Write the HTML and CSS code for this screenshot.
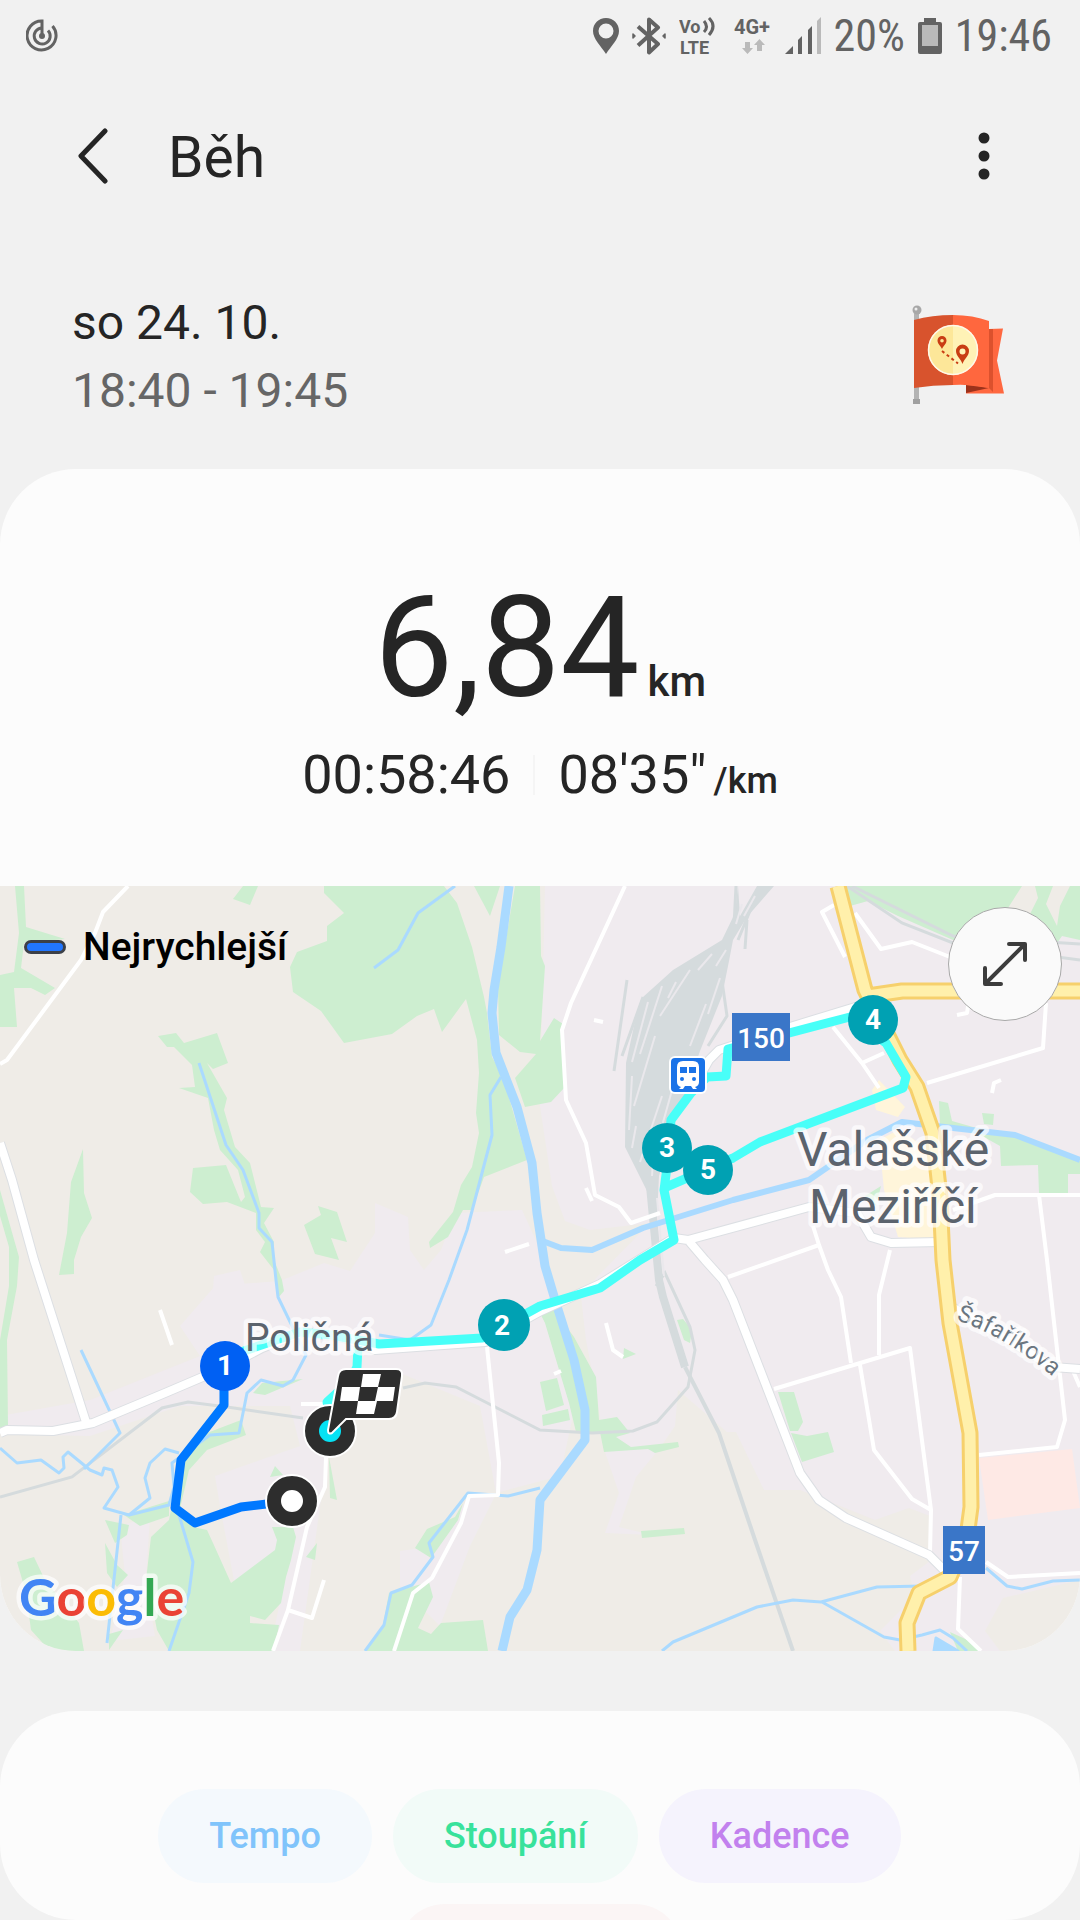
FILE: index.html
```html
<!DOCTYPE html>
<html lang="cs">
<head>
    <meta charset="UTF-8">
    <meta name="viewport" content="width=device-width, initial-scale=1.0">
    <title>Běh</title>
    <link rel="stylesheet" href="styles.css">
</head>
<body>

<div class="status-bar">
    <svg class="status-app" width="32" height="34" viewBox="0 0 32 34" fill="none" stroke="#636363" stroke-width="3">
        <path d="M16 17V2A14.500 14.500 0 1 0 26.500 7"/>
        <path d="M16 9A8 8 0 1 0 22 11.500"/>
        <circle cx="16" cy="17" r="3" fill="#636363" stroke="none"/>
    </svg>
    <svg width="26" height="36" viewBox="0 0 26 36" fill="#636363">
        <path fill-rule="evenodd" d="M13 0C5.500 0 0 5.600 0 13c0 8 8 15 13 23 5-8 13-15 13-23C26 5.600 20.500 0 13 0zm0 5.500a7.500 7.500 0 1 1 0 15 7.500 7.500 0 0 1 0-15z"/>
    </svg>
    <svg width="34" height="38" viewBox="0 0 34 38" fill="none" stroke="#636363" stroke-width="4" stroke-linejoin="round">
        <path d="M6 9.500L26 27 17 35.500V2.500L26 10.500 6 28.500"/>
        <path d="M1 17v4l2-2zM33 17v4l-2-2z" stroke-width="1.500" fill="#636363"/>
    </svg>
    <svg class="status-volte" width="38" height="46" viewBox="0 -4 38 46">
        <text x="0" y="16">Vo</text>
        <text x="1" y="37">LTE</text>
        <path d="M25 4q5 6 0 11M30 1q8 8 0 17" fill="none" stroke="#636363" stroke-width="3"/>
    </svg>
    <svg class="status-network" width="42" height="38" viewBox="0 0 42 38">
        <text x="4" y="17">4G+</text>
        <path d="M15 25h5v6h3l-5.500 6-5.500-6h3zM27 34v-6h-3l5.500-6 5.500 6h-3v6z" fill="#bababa"/>
    </svg>
    <svg width="36" height="38" viewBox="0 0 36 38" fill="#636363">
        <path d="M0 37l8-8v8zM13 37V23l4-4v18zM23 37V13l4-4v28z"/>
        <path d="M32 37V4l4-4v37z" fill="#bababa"/>
    </svg>
    <span>20%</span>
    <svg width="24" height="36" viewBox="0 0 24 36">
        <path d="M6 0h12v4h4q2 0 2 2v28q0 2-2 2H2q-2 0-2-2V6q0-2 2-2h4z" fill="#636363"/>
        <path d="M4 7h16v21H4z" fill="#bababa"/>
    </svg>
    <span>19:46</span>
</div>

<header class="app-bar">
    <button class="icon-button" aria-label="Zpět">
        <svg width="30" height="56" viewBox="0 0 30 56" fill="none" stroke="#252525" stroke-width="5" stroke-linecap="round" stroke-linejoin="round">
            <path d="M27 3L3 28l24 25"/>
        </svg>
    </button>
    <h1>Běh</h1>
    <button class="icon-button menu-button" aria-label="Další možnosti">
        <svg width="12" height="50" viewBox="0 0 12 50" fill="#252525">
            <circle cx="6" cy="7" r="5.500"/><circle cx="6" cy="25" r="5.500"/><circle cx="6" cy="43" r="5.500"/>
        </svg>
    </button>
</header>

<section class="summary">
    <div>
        <p class="date">so 24. 10.</p>
        <p class="time">18:40 - 19:45</p>
    </div>
    <svg width="96" height="106" viewBox="0 0 96 106">
        <path d="M2 10h5v88H2z" fill="#b3b3b3"/>
        <path d="M1 95h7v5H1z" fill="#a0a0a0"/>
        <circle cx="5" cy="6" r="4.500" fill="#a8a8a8"/>
        <circle cx="4" cy="5" r="1.500" fill="#eee"/>
        <path d="M77 25l14-.500-6 32 7 33H54v-9z" fill="#ff6840"/>
        <path d="M77 25h4v63l-4-4z" fill="#dc512d"/>
        <path d="M54 81l23 3-23 5z" fill="#9c321b"/>
        <path d="M2 16Q20 11 41 11v70q-20 0-39 3z" fill="#d8532d"/>
        <path d="M41 11q20 0 36 6v67q-18-4-36-3z" fill="#ff673e"/>
        <circle cx="41" cy="46" r="25" fill="#fff2b6"/>
        <path d="M41 22a24 24 0 0 0 0 48z" fill="#fde799"/>
        <circle cx="41" cy="46" r="24.500" fill="none" stroke="#fff8e8" stroke-width="1.500"/>
        <path fill-rule="evenodd" d="M30 32a4.500 4.500 0 0 0-4.500 4.500C25.500 40 29 42 30 45c1-3 4.500-5 4.500-8.500A4.500 4.500 0 0 0 30 32zm0 3a1.800 1.800 0 1 1 0 3.600 1.800 1.800 0 0 1 0-3.600zM50.500 40.500A6.500 6.500 0 0 0 44 47c0 5 5 8 6.500 13 1.500-5 6.500-8 6.500-13a6.500 6.500 0 0 0-6.500-6.500zm0 4a3 3 0 1 1 0 6 3 3 0 0 1 0-6z" fill="#c93d13"/>
        <path d="M30 47l16 12.500" stroke="#c93d13" stroke-width="2" stroke-dasharray="3 3"/>
    </svg>
</section>

<main class="workout">
    <div class="stats">
        <p class="distance">6,84 <span class="unit">km</span></p>
        <div class="details">
            <span>00:58:46</span>
            <span class="divider"></span>
            <span class="pace">08'35" <span class="unit">/km</span></span>
        </div>
    </div>

    <div class="map">
        <svg class="map-canvas" viewBox="0 0 1080 765" role="img" aria-label="Mapa trasy">
            <rect width="1080" height="765" fill="#efece7"/>

            <!-- built-up areas -->
            <g fill="#f0ebef">
                <path d="M545 0H1080V694L1003 712 985 745 1000 765H895L880 745 915 710 910 690 930 675V630L909 622 875 634 800 604H764L736 546H727L678 504 675 540 660 562 636 591 619 641 652 649 605 647 619 607 605 566 598 517 586 454 581 411 597 391 650 337 590 344 565 335 552 300 540 220z"/>
                <path d="M0 530L90 514 200 470 180 440 215 400 280 395 324 377 350 385 375 347V317L408 331 410 364 424 384 441 364 455 327 522 324 545 374 575 520 560 590 496 607 480 520 400 487 345 510 330 560 320 620 300 765H270L295 640 293 700 235 700 220 620 215 590 300 560 290 520H180L90 550 0 548z"/>
                <path d="M120 640L150 630 146 694 155 750 110 755 125 690zM400 665L435 660 470 610 495 610 470 660 440 740 400 700z"/>
                <path d="M214 390l26-6 10 30-20 16-18-14z"/>
            </g>

            <!-- woods and parks -->
            <g fill="#cdeed0">
                <path d="M15 0H24L26 41 65 53 24 57 21 82 55 102 45 109 31 102H14L17 141H0V89L14 86 19 47z"/>
                <path d="M243 0H258L250 19 233 13z"/>
                <path d="M324 0H444L457 17 472 61 484 111 487 127 492 171 503 191 527 274 484 291 472 324H463L448 351 430 362 429 356 453 326 461 299 472 281 479 247 476 227 479 187 477 154 466 113 442 146 434 123 417 130 392 148 344 157 321 125 293 106 290 81 297 66 327 55V40L344 27 324 7z"/>
                <path d="M474 0H500L490 30z"/>
                <path d="M515 0H540L541 70 545 80 540 155 554 132 563 138 566 200 551 216 525 221 515 192 536 168 520 166 499 149 498 100z"/>
                <path d="M158 150L176 147 184 157 217 147 228 177 213 183 207 177 227 212 224 224 235 261 250 277 261 321 274 322 264 337 274 356V374L282 394 284 405 278 412 274 384 260 366 265 356 256 344V327L227 316 203 318 190 306 193 282 226 279 241 316 245 311 238 284 220 264 214 244 208 212 179 202 195 201 192 179 174 161H167z"/>
                <path d="M83 263L84 307 92 332 81 351 74 374V388L59 389 67 347 71 296z"/>
                <path d="M0 304L19 371 17 400 7 454 8 540 0 542V454L9 400V361L0 330z"/>
                <path d="M318 320L337 326 347 356 331 352 339 374 315 368 304 339 321 329z"/>
                <path d="M181 574L207 547 241 534 246 549 207 564 189 584 179 627 193 641 207 644 213 657 231 697 275 664 277 654 272 641H293L296 651 291 674 286 691 281 717 265 734 250 730V737L279 739 274 765H169L157 744 151 714 146 694 151 651 169 634z"/>
                <path d="M17 676L34 671 45 694 79 737 84 765H50L31 744 26 707z"/>
                <path d="M105 634L129 639 127 649 115 657zM105 657L117 679 128 689 117 701 107 687zM124 629L169 615V630L140 640zM109 748l14-4-14 20z"/>
                <path d="M427 643L455 631 463 617 458 634 431 672 415 662z"/>
                <path d="M389 707L429 696 433 711 418 742 431 748 441 737 483 734 488 765H365L382 744z"/>
                <path d="M253 507L262 497 303 493 265 509zM329 571L337 614 330 612zM317 657L315 674 306 671zM275 580L283 589 270 591z"/>
                <path d="M540 427L554 424 574 451 596 491 599 534 617 531 630 547 616 551 631 561 678 556 679 561 655 567 648 563 604 566 600 546H576L569 517 545 437z"/>
                <path d="M540 496L557 492 564 519 546 525zM542 529L568 523 570 534 543 540zM677 434L683 433 692 444 690 457 684 454zM624 462L636 468 623 473z"/>
                <path d="M778 506H794L803 536 798 545H790zM791 547L807 550 828 546 834 566 802 576zM641 645L684 642 685 648 642 652z"/>
                <path d="M950 746L974 757 979 765H958z"/>
                <path d="M845 0H1080V54L1062 50 1055 60 953 54 898 30 868 15 850 20z"/>
                <path d="M939 215L948 217 952 235 980 243 940 240zM982 227L994 228 993 239 984 238z"/>
                <path d="M975 246L1022 249 1080 275V288H1068V307H1039L1038 279 1001 280 1000 260zM881 300L876 320 865 310z"/>
            </g>
            <path d="M1008 22L1022 0H1035L1038 12 1028 32zM1046 18L1053 0H1070L1060 20 1057 40z" fill="#efece7"/>
            <path d="M979 572L1072 563 1080 622 988 634z" fill="#fee9e5"/>
            <path d="M879 194L905 221 898 231 876 224 872 204zM879 254L898 244 926 261 946 294 933 354 898 351 884 304z" fill="#fff5da"/>

            <!-- railway -->
            <g fill="none" stroke="#d5dbdd" stroke-width="4">
                <path d="M738 0L735 27 722 54 673 84 643 111 634 140 626 177 625 261 650 311 657 330 659 290 672 245 700 165 722 110 729 75 733 54 747 31 774 0 757 0 740 30z" fill="#d5dbdd" stroke="none"/>
                <path d="M627 94L614 185M643 111L622 170M738 54L752 20M745 63L747 34M722 95L727 130 708 160M736 0L734 40" stroke-width="3"/>
                <path d="M650 300L659 394 663 411 685 481" stroke-width="8"/>
                <path d="M656 400L665 387 690 441 695 464 688 501 657 536 633 545 592 547 540 544 456 501 425 497 403 502M0 611L72 591 162 522 188 516 227 521 303 532" stroke-width="3"/>
                <path d="M685 481L719 547 754 651 793 765"/>
                <path d="M847 0L902 37 953 57 1080 74M852 0L953 50 1080 58" stroke-width="3"/>
            </g>
            <!-- gaps between the station tracks -->
            <path d="M648 116L632 176M662 100L640 168M690 84L660 130M676 96L668 112M712 68L698 84M726 64L716 80M655 150L634 220M632 190L629 244M706 118L690 160M720 92L708 128M662 210L640 276M676 190L662 240M636 240L632 262M742 18L736 38M755 10L744 30M655 240L652 290M657 312L664 390" fill="none" stroke="#eae8ec" stroke-width="2"/>

            <!-- rivers and streams -->
            <g fill="none" stroke="#aadaff" stroke-width="3" stroke-linejoin="round">
                <path d="M509 0L501 61 494 104 492 127 496 167 517 221 532 277 537 327 545 380 556 417 574 474 585 524V554L540 614 537 664 527 704 510 731 502 765" stroke-width="9"/>
                <path d="M540 354L561 362 592 364 643 342 733 314 809 294 867 254 902 236 953 242 1015 249 1080 274" stroke-width="6"/>
                <path d="M455 0L418 27 398 64 374 82"/>
                <path d="M199 177L226 259 243 284 259 327V342L272 356 276 394 278 411 294 444 306 469 293 494 283 500 261 494 247 507 239 547 210 549 172 577 174 601 169 619 129 629"/>
                <path d="M501 191L490 209 492 249 467 344 449 394 431 439 410 454 379 449"/>
                <path d="M81 464L120 547 84 583M0 562L17 577 41 574 59 587 64 582 63 571 68 566 90 584 102 589 104 582 112 584 118 601 104 622 129 629 150 612 145 592 150 577 165 563 179 567"/>
                <path d="M121 629L107 757M176 619L193 676 189 707 169 765"/>
                <path d="M540 602L508 610 468 607 429 657 433 671 412 699 391 707 384 739 365 765"/>
                <path d="M662 765L673 756 757 721 793 714 821 716 877 701 922 700M822 716L884 751 900 754 922 749 940 744 953 752 967 765M986 682L1007 700 1022 703 1053 695 1080 694"/>
                <path d="M936 752L958 765H934z" fill="#aadaff"/>
            </g>

            <!-- side streets -->
            <g fill="none" stroke="#fff" stroke-width="4" stroke-linejoin="round">
                <path d="M128 0L103 26 95 47 81 74 7 174 0 178M160 424L172 459M301 518H327"/>
                <path d="M487 461L499 577 498 609 469 610 461 637 432 692 413 707 394 765"/>
                <path d="M326 571L325 601 307 641 288 724 273 765M288 724L312 732 324 694"/>
                <path d="M625 0L571 117 562 144 566 214 586 257 595 309 619 321 631 337 660 327M586 302L592 315M594 134L603 136M505 366L529 358"/>
                <path d="M834 19L822 26 845 71M855 27L881 63 912 56 950 71M833 141L862 177 879 202M862 177L884 167M927 197L1043 162 1046 117M1001 194L994 197 992 207M969 114L967 127 957 129"/>
                <path d="M728 391L819 359 813 340M819 359L828 384 841 411 851 477M890 364L879 409V469M774 503L910 462 931 624 930 667M860 479L874 564 912 613 931 624"/>
                <path d="M953 324L995 309H1080M1039 309L1047 374 1065 534 1057 561 979 569M1073 485L1080 501M960 691L958 743 981 765M986 676L1008 691 1080 687M606 437L613 464 623 471M554 488L561 485"/>
            </g>

            <!-- main streets, grey casing first -->
            <g fill="none" stroke-linejoin="round">
                <g stroke="#dcdfe3" stroke-width="10">
                    <path d="M0 257L12 294 34 374 86 536M0 547L7 544 53 545 93 537 165 507 226 481 262 462 303 446 344 452 375 464 485 456 541 425 600 398 674 352"/>
                    <path d="M674 352L688 354 809 321 857 327 871 351 891 357 940 356M688 354L705 374 723 394 733 414 800 587 819 614 846 632 929 669 948 688M952 421L1053 481 1080 483M862 119L790 141 719 164 709 174 700 190"/>
                </g>
                <g stroke="#fff" stroke-width="8">
                    <path d="M0 257L12 294 34 374 86 536M0 547L7 544 53 545 93 537 165 507 226 481 262 462 303 446 344 452 375 464 485 456 541 425 600 398 674 352"/>
                    <path d="M674 352L688 354 809 321 857 327 871 351 891 357 940 356M688 354L705 374 723 394 733 414 800 587 819 614 846 632 929 669 948 688M952 421L1053 481 1080 483M862 119L790 141 719 164 709 174 700 190"/>
                </g>
                <path d="M838 0L865 104 900 174 917 201 933 247 940 311 943 374 950 437 970 547 971 621 967 651 950 691 919 707 907 737 908 765M868 110L902 105H1080" stroke="#f6d06c" stroke-width="17"/>
                <path d="M838 0L865 104 900 174 917 201 933 247 940 311 943 374 950 437 970 547 971 621 967 651 950 691 919 707 907 737 908 765M868 110L902 105H1080" stroke="#fff0ab" stroke-width="11"/>
            </g>

            <!-- track -->
            <g fill="none" stroke="#48fff8" stroke-width="9" stroke-linejoin="round">
                <path d="M226 481L241 466 300 446 331 449 379 458 482 452 540 420 600 402 640 374 674 354 664 304 667 281 671 234 691 207 707 191 726 190 728 163 850 131 886 157 906 191 903 202 760 256 733 272 664 302"/>
                <path d="M330 530L327 516 350 495 357 481 358 460"/>
                <path d="M224 500V519L181 574 175 622 195 637 241 621 292 615" stroke="#0078ff"/>
            </g>

            <!-- place names -->
            <g class="place">
                <text x="245" y="465" class="village">Poličná</text>
                <text x="893" y="280" class="town">Valašské</text>
                <text x="893" y="337" class="town">Meziříčí</text>
                <path id="street" d="M956 434Q1005 450 1052 490" fill="none" stroke="none"/>
                <text class="street"><textPath href="#street">Šafaříkova</textPath></text>
            </g>

            <g class="shield">
                <rect x="732" y="127" width="58" height="48"/>
                <text x="761" y="162">150</text>
                <rect x="943" y="640" width="42" height="48"/>
                <text x="964" y="675">57</text>
            </g>

            <!-- train station -->
            <g>
                <rect x="669" y="170" width="38" height="38" rx="6" fill="#fff"/>
                <rect x="671" y="172" width="34" height="34" rx="4" fill="#1a73e8"/>
                <path d="M683 175h10q6 0 6 6v15q0 4-4 5l2 2h-4l-2-3h-6l-2 3h-4l2-2q-4-1-4-5v-15q0-6 6-6z" fill="#fff"/>
                <path d="M680 181h7v6h-7zM689 181h7v6h-7z" fill="#1a73e8"/>
                <circle cx="682" cy="193" r="2" fill="#1a73e8"/><circle cx="694" cy="193" r="2" fill="#1a73e8"/>
            </g>

            <!-- kilometre marks -->
            <g class="mark">
                <circle cx="225" cy="480" r="25" fill="#0060f3"/><text x="225" y="489">1</text>
                <circle cx="504" cy="439" r="26" fill="#00a1b3"/><text x="502" y="449">2</text>
                <circle cx="667" cy="262" r="25" fill="#00a1b3"/><text x="667" y="271">3</text>
                <circle cx="708" cy="284" r="25" fill="#00a1b3"/><text x="708" y="293">5</text>
                <circle cx="873" cy="134" r="25" fill="#00a1b3"/><text x="873" y="143">4</text>
            </g>

            <!-- start and finish -->
            <g stroke="#fff" stroke-width="2">
                <circle cx="292" cy="615" r="26" fill="#2d2d2d"/>
                <circle cx="292" cy="615" r="10" fill="#fff"/>
                <circle cx="330" cy="545" r="26" fill="#2d2d2d"/>
                <circle cx="330" cy="545" r="11" fill="#05e2f4" stroke="none"/>
                <path d="M346 483h50q7 0 6 7l-5 36q-1 7-8 7h-43l-14 14q-4 2-4-3l10-54q1-7 8-7z" fill="#2d2d2d"/>
                <path d="M363 488h18l-3 13h17l-2 14h-16l-3 13h-18l2-13h-18l2-14h19zM360 501l-2 14h17l3-14z" fill="#fff" fill-rule="evenodd" stroke="none"/>
            </g>

            <text class="google" x="19" y="730"><tspan fill="#4285f4">G</tspan><tspan fill="#ea4335">o</tspan><tspan fill="#fbbc05">o</tspan><tspan fill="#4285f4">g</tspan><tspan fill="#34a853">l</tspan><tspan fill="#ea4335">e</tspan></text>
        </svg>

        <div class="legend">
            <span class="legend-line"></span>
            <span>Nejrychlejší</span>
        </div>
        <button class="expand-button" aria-label="Zvětšit mapu">
            <svg width="46" height="46" viewBox="0 0 46 46" fill="none" stroke="#3c3c3c" stroke-width="4" stroke-linecap="round" stroke-linejoin="round">
                <path d="M27 3h16v16M3 27v16h16M4 42L42 4"/>
            </svg>
        </button>
    </div>
</main>

<section class="charts">
    <div class="chips">
        <button class="chip pace-chip">Tempo</button>
        <button class="chip climb-chip">Stoupání</button>
        <button class="chip cadence-chip">Kadence</button>
    </div>
    <div class="chip next-chip"></div>
</section>

</body>
</html>
```
FILE: styles.css
```css
* {
    box-sizing: border-box;
}
body {
    font-family: Roboto, sans-serif;
    margin: 0;
    height: 100vh;
    display: flex;
    flex-direction: column;
    overflow: hidden;
    background-color: #f1f1f1;
    color: #252525;
}
h1,
p {
    margin: 0;
    font-weight: 400;
}
button {
    border: none;
    padding: 0;
    font-family: inherit;
    cursor: pointer;
}
svg {
    display: block;
    flex-shrink: 0;
}

/* Status bar */
.status-bar {
    display: flex;
    align-items: center;
    gap: 13px;
    height: 72px;
    padding: 0 28px 0 26px;
    flex-shrink: 0;
    color: #636363;
    font-family: "Roboto Condensed", Roboto, sans-serif;
    font-size: 44px;
}
.status-app {
    margin-right: auto;
}
.status-volte,
.status-network {
    fill: #636363;
    font-family: Roboto, sans-serif;
    font-weight: 700;
    font-size: 20px;
}
.status-volte {
    font-size: 18px;
}

/* App bar */
.app-bar {
    display: flex;
    align-items: center;
    height: 168px;
    padding: 0 72px;
    flex-shrink: 0;
}
.app-bar h1 {
    padding-top: 4px;
    font-size: 57px;
    line-height: 72px;
}
.icon-button {
    display: flex;
    align-items: center;
    justify-content: center;
    width: 42px;
    height: 72px;
    margin-right: 54px;
    background: none;
}
.menu-button {
    width: 48px;
    margin: 0 0 0 auto;
}

/* Date and badge */
.summary {
    display: flex;
    justify-content: space-between;
    align-items: center;
    padding: 49px 72px 44px;
    font-size: 48px;
    line-height: 68px;
}
.time {
    color: #666;
}

/* Workout card */
.workout {
    flex-shrink: 0;
    border-radius: 76px;
    overflow: hidden;
    background-color: #fcfcfc;
}
.stats {
    padding: 99px 24px 79px;
}
.distance {
    display: flex;
    justify-content: center;
    align-items: baseline;
    gap: 8px;
    font-size: 141px;
    line-height: 160px;
}
.unit {
    font-weight: 500;
    line-height: 1;
}
.distance .unit {
    font-size: 42px;
}
.details {
    display: flex;
    justify-content: center;
    align-items: center;
    gap: 23px;
    margin-top: 15px;
    font-size: 54px;
    line-height: 64px;
}
.divider {
    width: 2px;
    height: 40px;
    background-color: #f5f5f5;
}
.pace {
    display: flex;
    align-items: baseline;
    gap: 7px;
}
.pace .unit {
    font-size: 36px;
}

/* Map */
.map {
    position: relative;
}
.map-canvas {
    width: 100%;
    height: auto;
}
.place text {
    fill: #5b636d;
    stroke: rgba(255, 255, 255, 0.7);
    stroke-width: 9px;
    stroke-linejoin: round;
    paint-order: stroke;
}
.village {
    font-size: 39px;
}
.town {
    font-size: 48px;
    text-anchor: middle;
}
.place .street {
    font-size: 24px;
    fill: #6b7680;
}
.shield {
    fill: #3a76c8;
}
.shield text,
.mark text {
    fill: #fff;
    font-size: 28px;
    font-weight: 500;
    text-anchor: middle;
}
.mark text {
    font-weight: 700;
}
.google {
    font-family: Lato, sans-serif;
    font-size: 52px;
    font-weight: 700;
    stroke: rgba(255, 255, 255, 0.7);
    stroke-width: 9px;
    stroke-linejoin: round;
    paint-order: stroke;
}
.legend {
    position: absolute;
    top: 39px;
    left: 24px;
    display: flex;
    align-items: center;
    gap: 17px;
    color: #000;
    font-size: 39px;
    font-weight: 500;
    line-height: 44px;
}
.legend-line {
    width: 42px;
    height: 14px;
    border: 3px solid #3c4048;
    border-radius: 7px;
    background-color: #2176ff;
}
.expand-button {
    position: absolute;
    top: 21px;
    right: 18px;
    display: flex;
    align-items: center;
    justify-content: center;
    width: 114px;
    height: 114px;
    border: 1px solid #a9a9a9;
    border-radius: 50%;
    background-color: #fafafa;
}

/* Chart picker */
.charts {
    flex: 1;
    min-height: 0;
    margin-top: 60px;
    padding-top: 78px;
    border-radius: 76px;
    overflow: hidden;
    background-color: #fcfcfc;
}
.chips {
    display: flex;
    justify-content: center;
    gap: 21px;
    padding-right: 21px;
    margin-bottom: 21px;
}
.chip {
    height: 94px;
    padding: 0 51px;
    border-radius: 47px;
    font-size: 36px;
    font-weight: 500;
}
.pace-chip {
    background-color: #f4f9fd;
    color: #80c4fb;
}
.climb-chip {
    background-color: #f2fbf8;
    color: #38e29b;
}
.cadence-chip {
    background-color: #f5f3fd;
    color: #c281ee;
}
.next-chip {
    width: 284px;
    margin: 0 auto;
    background-color: #fbf5f5;
}
```
